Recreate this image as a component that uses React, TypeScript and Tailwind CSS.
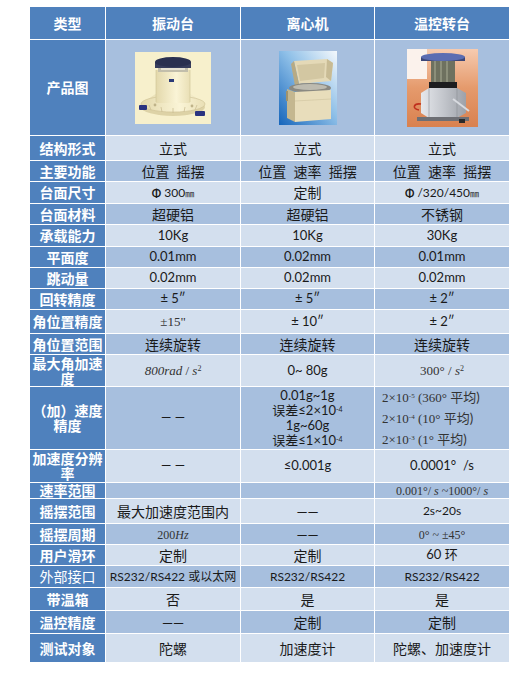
import React from "react";

const LIGHT = "bg-[#d3dfee]";
const MID = "bg-[#a7bfde]";

const Serif = ({ children }: { children: React.ReactNode }) => (
  <span className="font-['Liberation_Serif',serif] text-[#333]">{children}</span>
);

// vibration table photo
const VibrationTable = () => (
  <svg width="76" height="72" viewBox="0 0 76 72">
    <defs>
      <linearGradient id="vbody" x1="0" y1="0" x2="1" y2="0">
        <stop offset="0" stopColor="#e3d8ab" />
        <stop offset="0.6" stopColor="#faf4d6" />
        <stop offset="1" stopColor="#e9dfb5" />
      </linearGradient>
    </defs>
    <rect width="76" height="72" fill="#f7f0cc" />
    <ellipse cx="38" cy="55" rx="32" ry="9" fill="#ddd2a6" />
    <path d="M6 52 L22 41 L54 41 L70 52 Z" fill="url(#vbody)" />
    <ellipse cx="38" cy="52" rx="32" ry="8" fill="url(#vbody)" stroke="#cdbf92" strokeWidth="0.6" />
    <path d="M14 53 L16 58 M26 55 L27 60 M38 56 L38 61 M50 55 L49 60 M62 53 L60 58" stroke="#cbbf95" strokeWidth="0.8" />
    <rect x="21" y="18" width="34" height="33" fill="url(#vbody)" />
    <path d="M21 18 L21 50 M55 18 L55 50" stroke="#cfc396" strokeWidth="0.6" />
    <rect x="34" y="27" width="5" height="3" fill="#2b3a78" />
    <rect x="23" y="15" width="30" height="5" fill="#c2beab" />
    <rect x="26" y="16" width="24" height="2" fill="#e6e2d2" />
    <rect x="20" y="10" width="36" height="6" fill="#373d5c" />
    <ellipse cx="38" cy="10" rx="18" ry="5" fill="#2a3050" />
    <rect x="4" y="53" width="8" height="5" rx="1" fill="#2a3380" />
    <rect x="60" y="59" width="10" height="5" rx="1" fill="#2a3380" />
    <circle cx="20" cy="53" r="1.4" fill="#bfb389" />
    <circle cx="57" cy="54" r="1.4" fill="#bfb389" />
  </svg>
);

// centrifuge photo
const Centrifuge = () => (
  <svg width="58" height="74" viewBox="0 0 58 74">
    <defs>
      <linearGradient id="cbg" x1="1" y1="0" x2="0" y2="1">
        <stop offset="0" stopColor="#f4f8fc" />
        <stop offset="0.45" stopColor="#8fc0e8" />
        <stop offset="1" stopColor="#1565bb" />
      </linearGradient>
    </defs>
    <rect width="58" height="74" fill="url(#cbg)" />
    <path d="M15 10 L48 8 L54 12 L52 30 L20 33 Z" fill="#e4d9b7" />
    <path d="M48 8 L54 12 L52 30 L47 26 Z" fill="#c8bb94" />
    <path d="M18 14 L46 12 L45 27 L21 30 Z" fill="#d3c7a2" />
    <path d="M15 10 L20 33 L16 35 L12 13 Z" fill="#b7aa84" />
    <ellipse cx="31" cy="37" rx="21" ry="5" fill="#8a8982" />
    <ellipse cx="31" cy="36" rx="17" ry="3" fill="#bdbbb0" />
    <path d="M8 38 L16 41 L16 71 L8 67 Z" fill="#c4b790" />
    <path d="M16 41 L52 39 L52 68 L16 71 Z" fill="#e8ddbb" />
    <path d="M16 50 L52 48" stroke="#cfc39e" strokeWidth="0.6" />
    <rect x="7" y="40" width="2" height="10" fill="#9f936e" />
  </svg>
);

// temperature-controlled rotary table photo
const ThermalTable = () => (
  <svg width="71" height="78" viewBox="0 0 71 78">
    <defs>
      <linearGradient id="tbg" x1="0" y1="0" x2="0" y2="1">
        <stop offset="0" stopColor="#f6cbb0" />
        <stop offset="0.5" stopColor="#e59a6c" />
        <stop offset="1" stopColor="#d9814f" />
      </linearGradient>
      <linearGradient id="tbase" x1="0" y1="0" x2="1" y2="0">
        <stop offset="0" stopColor="#e6e8ec" />
        <stop offset="0.5" stopColor="#c3c6cc" />
        <stop offset="1" stopColor="#9da1a8" />
      </linearGradient>
    </defs>
    <rect width="71" height="78" fill="url(#tbg)" />
    <rect x="0" y="0" width="20" height="30" fill="#fbf2ec" />
    <rect x="24" y="11" width="24" height="23" fill="#6e715f" />
    <rect x="27" y="11" width="2" height="23" fill="#8c8f7a" />
    <rect x="33" y="11" width="2" height="23" fill="#8c8f7a" />
    <rect x="39" y="11" width="2" height="23" fill="#8c8f7a" />
    <rect x="22" y="33" width="28" height="7" fill="#1d1d1f" />
    <rect x="14" y="8" width="44" height="4" fill="#3c4677" />
    <ellipse cx="36" cy="8" rx="22" ry="4" fill="#5b6db2" />
    <path d="M14 44 L22 39 L50 39 L59 44 L59 64 L50 69 L22 69 L14 64 Z" fill="url(#tbase)" />
    <path d="M22 39 L22 69" stroke="#8b8f96" strokeWidth="0.6" />
    <path d="M50 39 L50 69" stroke="#8b8f96" strokeWidth="0.6" />
    <rect x="10" y="68" width="52" height="4" fill="#6e6f74" />
    <path d="M14 55 C6 54 5 60 12 61" stroke="#c0301e" strokeWidth="1.6" fill="none" />
    <path d="M46 50 L62 62" stroke="#d8dbe0" strokeWidth="2" />
    <rect x="52" y="70" width="6" height="4" fill="#2a2a2a" />
  </svg>
);

type Row = {
  label: React.ReactNode;
  h: string;
  tone: string;
  cells: React.ReactNode[];
  size?: string;
  plain?: boolean;
};

const rows: Row[] = [
  {
    label: "产品图",
    h: "h-[95px]",
    tone: MID,
    cells: [<VibrationTable key="a" />, <Centrifuge key="b" />, <ThermalTable key="c" />],
  },
  { label: "结构形式", h: "h-[24px]", tone: LIGHT, cells: ["立式", "立式", "立式"] },
  { label: "主要功能", h: "h-[20px]", tone: MID, cells: ["位置  摇摆", "位置  速率  摇摆", "位置  速率  摇摆"] },
  {
    label: "台面尺寸",
    h: "h-[21px]",
    tone: LIGHT,
    size: "text-[12px]",
    cells: [
      <span key="a">
        <b className="text-[11px]">Φ</b> 300<span className="text-[9px]">㎜</span>
      </span>,
      <span key="b" className="text-[14px]">定制</span>,
      <span key="c">
        <b className="text-[11px]">Φ</b> /320/450<span className="text-[9px]">㎜</span>
      </span>,
    ],
  },
  { label: "台面材料", h: "h-[20px]", tone: MID, cells: ["超硬铝", "超硬铝", "不锈钢"] },
  { label: "承载能力", h: "h-[21px]", tone: LIGHT, size: "text-[13px]", cells: ["10Kg", "10Kg", "30Kg"] },
  { label: "平面度", h: "h-[20px]", tone: MID, size: "text-[13px]", cells: ["0.01mm", "0.02mm", "0.01mm"] },
  { label: "跳动量", h: "h-[20px]", tone: LIGHT, size: "text-[13px]", cells: ["0.02mm", "0.02mm", "0.02mm"] },
  { label: "回转精度", h: "h-[20px]", tone: MID, size: "text-[13px]", cells: ["± 5″", "± 5″", "± 2″"] },
  { label: "角位置精度", h: "h-[23px]", tone: LIGHT, size: "text-[13px]", cells: [<Serif key="a">±15"</Serif>, "± 10″", "± 2″"] },
  { label: "角位置范围", h: "h-[20px]", tone: MID, cells: ["连续旋转", "连续旋转", "连续旋转"] },
  {
    label: "最大角加速度",
    h: "h-[31px]",
    tone: LIGHT,
    size: "text-[13px]",
    cells: [
      <Serif key="a">
        <i>800rad</i> / <i>s</i>
        <sup className="text-[8px]">2</sup>
      </Serif>,
      "0~ 80g",
      <Serif key="c">
        300° / <i>s</i>
        <sup className="text-[8px]">2</sup>
      </Serif>,
    ],
  },
  {
    label: "（加）速度精度",
    h: "h-[62px]",
    tone: MID,
    size: "text-[13px]",
    cells: [
      "— —",
      <div key="b" className="flex flex-col items-center leading-[15px]">
        <span>0.01g~1g</span>
        <span>
          误差≤2×10<sup className="text-[7px]">-4</sup>
        </span>
        <span>1g~60g</span>
        <span>
          误差≤1×10<sup className="text-[7px]">-4</sup>
        </span>
      </div>,
      <div key="c" className="flex w-full flex-col items-start gap-[6px] pl-[7px] text-left leading-[15px] text-[#333]">
        <span>
          <Serif>
            2×10<sup className="text-[7px]">-5</sup> (360°
          </Serif>{" "}
          平均)
        </span>
        <span>
          <Serif>
            2×10<sup className="text-[7px]">-4</sup> (10°
          </Serif>{" "}
          平均)
        </span>
        <span>
          <Serif>
            2×10<sup className="text-[7px]">-3</sup> (1°
          </Serif>{" "}
          平均)
        </span>
      </div>,
    ],
  },
  {
    label: "加速度分辨率",
    h: "h-[32px]",
    tone: LIGHT,
    size: "text-[13px]",
    cells: ["— —", "≤0.001g", "0.0001°  /s"],
  },
  {
    label: "速率范围",
    h: "h-[15px]",
    tone: MID,
    size: "text-[12px]",
    cells: [
      "",
      "",
      <Serif key="c">
        0.001°/ <i>s</i> ~1000°/ <i>s</i>
      </Serif>,
    ],
  },
  { label: "摇摆范围", h: "h-[24px]", tone: LIGHT, cells: ["最大加速度范围内", "——", <span key="c" className="text-[12px]">2s~20s</span>] },
  {
    label: "摇摆周期",
    h: "h-[20px]",
    tone: MID,
    cells: [
      <Serif key="a">
        <span className="text-[12px]">
          200<i>Hz</i>
        </span>
      </Serif>,
      "——",
      <Serif key="c">
        <span className="text-[12px]">0° ~ ±45°</span>
      </Serif>,
    ],
  },
  { label: "用户滑环", h: "h-[20px]", tone: LIGHT, cells: ["定制", "定制", <span key="c" className="text-[13px]">60 环</span>] },
  {
    label: "外部接口",
    h: "h-[21px]",
    tone: MID,
    size: "text-[12px]",
    plain: true,
    cells: ["RS232/RS422 或以太网", "RS232/RS422", "RS232/RS422"],
  },
  { label: "带温箱", h: "h-[22px]", tone: LIGHT, cells: ["否", "是", "是"] },
  { label: "温控精度", h: "h-[22px]", tone: MID, cells: ["——", "定制", "定制"] },
  { label: "测试对象", h: "h-[28px]", tone: LIGHT, cells: ["陀螺", "加速度计", "陀螺、加速度计"] },
];

export default function App() {
  return (
    <div className="h-[675px] w-[532px] bg-white pl-[30px] pt-[7px] font-['Lato','Noto_Sans_CJK_SC',sans-serif]">
      <div className="flex w-[479px] flex-col gap-px">
        {/* header */}
        <div className="grid h-[32px] grid-cols-[75px_134px_133px_134px] gap-x-px text-[14px] font-bold text-white">
          {["类型", "振动台", "离心机", "温控转台"].map((t) => (
            <div key={t} className="flex items-center justify-center bg-[#4f81bd]">
              {t}
            </div>
          ))}
        </div>

        {rows.map((r, i) => (
          <div key={i} className={`grid grid-cols-[75px_134px_133px_134px] gap-x-px ${r.h}`}>
            <div
              className={`flex items-center justify-center bg-[#4f81bd] px-[2px] text-center text-[14px] leading-[15px] text-white ${
                r.plain ? "font-normal" : "font-bold"
              }`}
            >
              {r.label}
            </div>
            {r.cells.map((c, j) => (
              <div
                key={j}
                className={`flex items-center justify-center overflow-hidden whitespace-pre text-center text-[#1a1a1a] ${r.tone} ${
                  r.size ?? "text-[14px]"
                }`}
              >
                {c}
              </div>
            ))}
          </div>
        ))}
      </div>
    </div>
  );
}
